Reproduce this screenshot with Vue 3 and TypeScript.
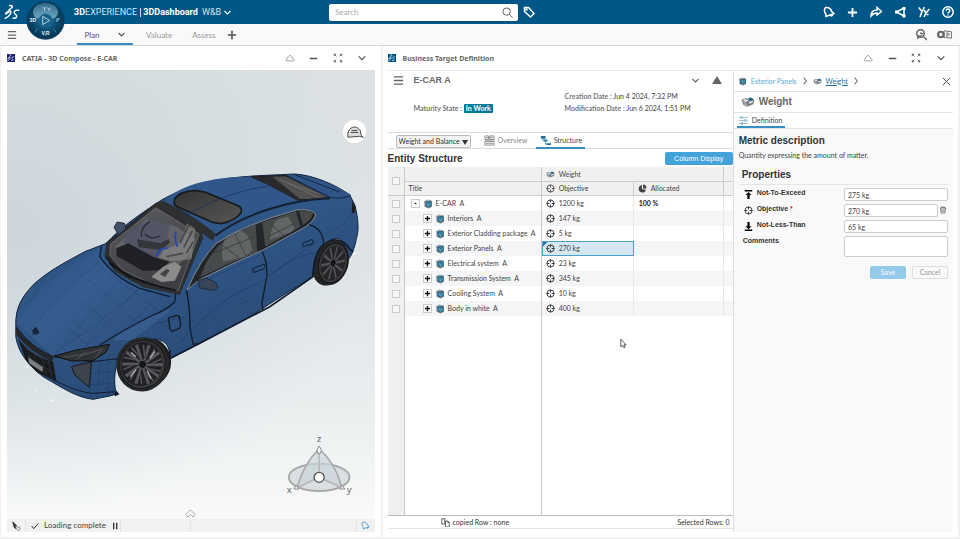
<script setup lang="ts">
import { ref } from 'vue'

interface Part {
  name: string
  objective: string
  root?: boolean
}

const parts: Part[] = [
  { name: 'E-CAR  A', objective: '1200 kg', root: true },
  { name: 'Interiors  A', objective: '147 kg' },
  { name: 'Exterior Cladding package  A', objective: '5 kg' },
  { name: 'Exterior Panels  A', objective: '270 kg' },
  { name: 'Electrical system  A', objective: '23 kg' },
  { name: 'Transmission System  A', objective: '345 kg' },
  { name: 'Cooling System  A', objective: '10 kg' },
  { name: 'Body in white  A', objective: '400 kg' },
]

const selected = ref(3)
const notToExceed = ref('275 kg')
const objective = ref('270 kg')
const notLessThan = ref('65 kg')
const comments = ref('')
const search = ref('')
const spokes = [0, 36, 72, 108, 144, 180, 216, 252, 288, 324]
</script>

<template>
  <div class="page">
    <svg class="defs" aria-hidden="true">
      <symbol id="i-menu" viewBox="0 0 12 12"><path d="M1 2h10M1 6h10M1 10h10" /></symbol>
      <symbol id="i-chev" viewBox="0 0 12 12"><path d="M2 4l4 4 4-4" /></symbol>
      <symbol id="i-right" viewBox="0 0 12 12"><path d="M4 1l4 5-4 5" /></symbol>
      <symbol id="i-plus" viewBox="0 0 12 12"><path d="M6 1v10M1 6h10" /></symbol>
      <symbol id="i-minus" viewBox="0 0 12 12"><path d="M1 6h10" /></symbol>
      <symbol id="i-close" viewBox="0 0 12 12"><path d="M2 2l8 8M10 2l-8 8" /></symbol>
      <symbol id="i-cloud" viewBox="0 0 12 12"><path d="M3 9.500C1 9.500 1 6.800 3 6.500C3.500 3 7 2 8 4.500C8.500 5.300 8.500 6 8.700 6.500C11.500 6.500 11.500 9.500 9.500 9.500Z" /></symbol>
      <symbol id="i-expand" viewBox="0 0 12 12">
        <path d="M1.500 1.500L4 4M10.500 1.500L8 4M1.500 10.500L4 8M10.500 10.500L8 8" />
        <path class="solid" d="M1 1h3L1 4zM11 1v3L8 1zM1 11V8l3 3zM11 11H8l3-3z" />
      </symbol>
      <symbol id="i-bell" viewBox="0 0 12 12"><path d="M2.500 1.500C6 1 8 3 8.700 5.500L11 7.500L3 10.500L2.800 8C1 6 1 3 2.500 1.500ZM7.500 9c1 1.500 2 1 2-.7" /></symbol>
      <symbol id="i-ds" viewBox="0 0 30 30">
        <path d="M9 3C15 2 17 4 12 8L8 11M2 18C8 9 15 11 11 18C9 22 5 24 1 26M3 18l6-4M15 25C22 26 25 22 20 18C16 14 18 10 27 11" />
      </symbol>
      <symbol id="i-part" viewBox="0 0 18 18">
        <path fill="#707880" d="M2 4L8 1l8 2v11l-6 3-7-3z" />
        <path fill="#b3bec6" d="M3 4l5-2 6 1-5 2zM2 6l2 1v7l-2-1z" />
        <circle cx="10" cy="9" r="5.500" fill="#17607f" />
        <path fill="none" stroke="#78bdd6" stroke-width="1.200" d="M7 8l3-2 3 2v3l-3 2-3-2zM7 8l3 2 3-2M10 10v3" />
      </symbol>
      <symbol id="i-weight" viewBox="0 0 24 18">
        <path fill="#777d82" d="M1 5l8-3 5 3 6-3 3 5-2 6-10 4-7-3z" />
        <path fill="#e4e7e9" d="M3 6l5-2 5 3-5 2zM13 9l6-3 2 3-6 3z" />
        <path fill="#1e668b" d="M12 3l5-2 4 4-5 3z" />
        <path fill="none" stroke="#fff" d="M4 9l5 3M6 13l5 2" />
      </symbol>
      <symbol id="i-target" viewBox="0 0 16 16"><circle cx="8" cy="8" r="6.300" /><path d="M8 1v5M8 10v5M1 8h5M10 8h5" /></symbol>
      <symbol id="i-pie" viewBox="0 0 16 16"><path class="solid" d="M7 2a6.500 6.500 0 1 0 7 8L7 9zM9 1a6.500 6.500 0 0 1 6 7H9z" /></symbol>
      <symbol id="i-trash" viewBox="0 0 12 12"><path d="M1.500 3h9M4 3V1.500h4V3M2.500 3l.7 7.500h5.600L9.500 3M4.700 5v4M7.300 5v4" /></symbol>
    </svg>

    <header class="topbar">
      <a href="#" class="brand" aria-label="Home"><svg class="ic ds"><use href="#i-ds" /></svg></a>
      <button class="compass" aria-label="Compass">
        <svg viewBox="0 0 114 114">
          <defs>
            <radialGradient id="ball" cx=".5" cy=".45" r=".55">
              <stop offset="0" stop-color="#2d7ea6" /><stop offset=".6" stop-color="#0b4d73" /><stop offset="1" stop-color="#053352" />
            </radialGradient>
            <linearGradient id="shine" x1="0" y1="0" x2="0" y2="1">
              <stop offset="0" stop-color="#3f7797" /><stop offset="1" stop-color="#8fbdd2" />
            </linearGradient>
          </defs>
          <circle cx="57" cy="57" r="56" fill="#0a3f61" />
          <circle cx="57" cy="57" r="51" fill="url(#ball)" />
          <path d="M21 37C18 18 36 6 57 6s39 12 36 31c-5 12-12 16-17 13C66 35 48 35 38 50c-6 3-13-1-17-13z" fill="url(#shine)" opacity=".75" />
          <path d="M34 80l-8 12M80 80l8 12" stroke="#4d9cc0" stroke-width="2" />
          <circle cx="57" cy="57" r="20" fill="#176087" stroke="#347e9f" />
          <path d="M49 45l20 12-20 12z" fill="none" stroke="#c7e8f5" stroke-width="2.500" />
          <path d="M48 17l6 5v6M60 17l-6 5M62 20l5 4v5M73 19l-6 5" fill="none" stroke="#e3f3f9" stroke-width="2" />
          <g fill="#e3f3f9" font-family="Liberation Sans, sans-serif" font-size="15" font-weight="700" text-anchor="middle">
            <text x="20" y="62">3D</text><text x="93" y="62">i²</text><text x="57" y="98">V,R</text>
          </g>
        </svg>
      </button>
      <button class="title"><b>3D</b>EXPERIENCE <i></i> <b>3DDashboard</b> <span>W&amp;B</span><svg class="ic s9 bold"><use href="#i-chev" /></svg></button>
      <form class="search" @submit.prevent>
        <input v-model="search" type="text" placeholder="Search" aria-label="Search" />
        <button aria-label="Run search">
          <svg class="ic s11" viewBox="0 0 12 12"><circle cx="5" cy="5" r="4" /><path d="M8 8l3.500 3.500" /></svg>
        </button>
      </form>
      <button class="tag" aria-label="Tags">
        <svg class="ic s12 bold" viewBox="0 0 12 12"><path d="M1.500 1.500h4l5.500 6-3.500 3.500-6-5.500z" /><circle cx="3.500" cy="3.500" r=".5" /></svg>
      </button>
      <nav class="tools">
        <button aria-label="Notifications"><svg class="ic s12 bold"><use href="#i-bell" /></svg></button>
        <button aria-label="Add"><svg class="ic s11 heavy"><use href="#i-plus" /></svg></button>
        <button aria-label="Share"><svg class="ic s12 bold" viewBox="0 0 12 12"><path d="M1 10c0-4 2-6 6-6V1.500L11.500 5.500 7 9V7C4.500 7 3 7.500 1 10z" /></svg></button>
        <button aria-label="Collaborate"><svg class="ic s12 bold" viewBox="0 0 12 12"><path d="M10 2L2.500 6 10 10M10 2v8" /><path class="solid" d="M8.500 1h3v3h-3zM1 4.500h3v3H1zM8.500 8.500h3v3h-3z" /></svg></button>
        <button aria-label="Communities"><svg class="ic s12 bold" viewBox="0 0 12 12"><path d="M.7 1.500L4 5.500M6.500 1L4 5.500 2 11M6 4l2 3M11.500 3L8 7l-2 4M8.500 8.500h2" /></svg></button>
        <button aria-label="Help"><svg class="ic s12 bold" viewBox="0 0 12 12"><circle cx="6" cy="6" r="5.200" /><path d="M4.300 4.700c0-2.300 3.500-2.300 3.500 0C7.800 6 6 6 6 7.500M6 8.600v1" /></svg></button>
      </nav>
    </header>

    <nav class="tabbar">
      <button class="burger" aria-label="Menu"><svg class="ic s10 bold"><use href="#i-menu" /></svg></button>
      <button class="tab on">Plan<svg class="ic s9 bold"><use href="#i-chev" /></svg></button>
      <button class="tab second">Valuate</button>
      <button class="tab third">Assess</button>
      <button class="addtab" aria-label="Add tab"><svg class="ic s10 heavy"><use href="#i-plus" /></svg></button>
      <div class="right">
        <button aria-label="Inspect"><svg class="ic s12 bold" viewBox="0 0 12 12"><circle cx="5.500" cy="4.500" r="3.700" /><path d="M8.500 7.500L12 11M3 10V7h4M5 4l3 1" /></svg></button>
        <button aria-label="Media"><svg class="ic media" viewBox="0 0 18 12"><circle cx="4.500" cy="6" r="3" stroke-width="2.400" /><path d="M8 2l8 1v7l-8-1zM11 4v4l3-2z" /></svg></button>
      </div>
    </nav>

    <main class="board">
      <section class="widget viewer">
        <header class="whead">
          <span class="app navy"><svg class="ic"><use href="#i-ds" /></svg></span>
          <h2>CATIA - 3D Compose - E-CAR</h2>
          <button aria-label="Cloud"><svg class="ic s10 thin"><use href="#i-cloud" /></svg></button>
          <button aria-label="Minimize"><svg class="ic s9 heavy"><use href="#i-minus" /></svg></button>
          <button aria-label="Maximize"><svg class="ic s10"><use href="#i-expand" /></svg></button>
          <button aria-label="Options"><svg class="ic s10 bold"><use href="#i-chev" /></svg></button>
        </header>

        <div class="scene">
          <svg class="model" viewBox="21 210 1104 1347" preserveAspectRatio="xMidYMid slice" role="img" aria-label="E-CAR">
            <defs>
              <linearGradient id="paint" x1="0" y1="0" x2=".6" y2="1">
                <stop offset="0" stop-color="#2c5080" /><stop offset=".5" stop-color="#2f5686" /><stop offset="1" stop-color="#27466f" />
              </linearGradient>
              <linearGradient id="hood" x1="0" y1="0" x2="1" y2=".8">
                <stop offset="0" stop-color="#2a4f7f" /><stop offset=".45" stop-color="#365d8e" /><stop offset="1" stop-color="#2b4e7e" />
              </linearGradient>
              <linearGradient id="glass" x1="0" y1="0" x2=".4" y2="1">
                <stop offset="0" stop-color="#5b5c60" /><stop offset="1" stop-color="#3d3e42" />
              </linearGradient>
              <linearGradient id="roofglass" x1="0" y1="0" x2="1" y2="1">
                <stop offset="0" stop-color="#343434" /><stop offset="1" stop-color="#575655" />
              </linearGradient>
              <clipPath id="shell"><path d="M160 590C210 540 280 330 305 265L300 290Q340 350 420 385L520 410 525 425 460 465 300 555 220 590Z" /></clipPath>
            </defs>
            <g transform="translate(0 480)">
              <ellipse cx="986" cy="306" rx="48" ry="72" fill="#222427" transform="rotate(14 986 306)" />
              <ellipse cx="438" cy="606" rx="76" ry="76" fill="#1d1f22" transform="rotate(22 438 606)" />
              <path fill="url(#paint)" stroke="#13243d" stroke-width="3" d="M48 500C45 440 70 405 105 370 150 330 200 305 255 275L320 250C360 205 410 170 470 130 510 102 570 80 640 65 710 48 760 48 885 42 940 45 1010 75 1050 105L1065 135C1077 180 1077 215 1070 235 1065 262 1055 290 1044 300L1030 245C1000 215 945 260 938 350L820 425 750 470 600 550 510 597C515 520 440 530 400 558 345 595 340 640 347 690L355 700 330 708 280 718C230 712 190 685 130 650 90 620 55 580 48 530Z" />
              <!-- hood -->
              <path fill="url(#hood)" d="M52 490C100 390 200 320 305 260L300 290Q340 350 420 385L520 410 525 425 460 465 300 555 160 590Z" />
              <path fill="#4a73a6" opacity=".35" d="M340 540C370 500 450 470 500 450 540 440 470 480 400 540Z" />
              <g fill="none" stroke="#17305a" stroke-width="1" opacity=".6" clip-path="url(#shell)">
                <path d="M100 380L360 600M150 330L400 560M200 300L450 520M250 280L500 470M280 250L520 430M90 560L300 330M150 600L370 350M220 600L430 370M300 590L490 390" />
              </g>
              <g fill="none" stroke="#17305a" stroke-width="1.500">
                <path d="M75 450L140 350M80 520C150 440 230 360 300 300M160 585C210 540 320 480 420 385M52 490C90 530 130 570 160 590" opacity=".5" />
                <path d="M275 605l-5 110M300 602l-8 113M325 600v108M270 640l75-6M270 675l75-6M350 597l-10 110M200 500l90 80" opacity=".6" />
              </g>
              <g fill="none" stroke="#101b2c" stroke-width="4">
                <path d="M305 258L300 290Q340 350 420 385L510 410M527 395L525 425Q500 450 460 465 370 510 300 555M320 250L470 130" />
                <path d="M50 500Q90 560 160 590L275 605 355 596M80 600C150 660 220 695 280 700L345 695" stroke-width="3" />
                <path d="M560 390Q572 450 570 500L580 553 600 550" />
              </g>
              <path d="M470 490L560 470" stroke="#1c3661" stroke-width="2" />
              <!-- windshield -->
              <path fill="#2c2e30" d="M320 250L470 128 490 125 600 190 610 235 540 405 430 382 345 335 314 288Z" />
              <path fill="url(#glass)" stroke="#77787a" stroke-width="2" d="M332 252L468 143 560 200 598 222 535 393 440 365 365 328 330 285Z" />
              <path fill="#77777b" opacity=".5" d="M345 260L440 178 530 200 590 240 570 280 510 340 430 290Z" />
              <path fill="#4d5266" d="M390 210l60-30 60 15-20 90-60 20-60-60z" opacity=".8" />
              <path fill="#202124" d="M350 265l35-15 75 40 50 15-30 25-50 3-80-46z" />
              <path fill="#35363a" d="M412 238l70 12 25-14 3 12-26 22-68-8z" />
              <path d="M435 222q20 20 45 6M450 185q-30 20-25 45" fill="none" stroke="#2a2b2f" stroke-width="4" />
              <path fill="#8d8c89" d="M495 262q25 6 50-22l18-52 24 20-12 90-60 6-38-12z" opacity=".6" />
              <path fill="none" stroke="#2849a8" stroke-width="6" d="M528 215q-5 25 5 45M506 264q-30-2-36 26" />
              <path d="M540 250l30-60M552 262l26-50M560 280l20-35M500 290l50-10" stroke="#333538" stroke-width="5" opacity=".7" />
              <path fill="#8c8b89" d="M455 350l35-30 35-14 20 14-20 42-40 4z" />
              <path fill="#424345" d="M480 342l20-15 10 4-14 20z" />
              <path d="M318 290Q360 340 430 366L530 392M328 310l60 40 100 32" fill="none" stroke="#141516" stroke-width="5" />
              <path fill="#435169" stroke="#232b38" stroke-width="3" d="M343 202l9-16 22 4 4 16-22 18z" />
              <!-- front end -->
              <path fill="#232527" d="M48 500Q85 555 160 590L158 606Q90 575 50 525Z" />
              <path fill="#17191b" d="M54 535Q90 585 160 606L170 665 110 635 78 600Z" />
              <path d="M70 560l90 60M80 585l82 55M78 550l20 65M100 570l18 60M125 588l15 56M145 600l12 58" stroke="#34373a" stroke-width="2" />
              <path fill="#7c7e80" d="M85 592l45 30-2 14-40-26z" />
              <path fill="#303236" stroke="#111" stroke-width="3" d="M163 588L230 570 330 553 318 577 280 602 215 603Z" />
              <path d="M190 592l70-10 50-16M230 598l30-22M285 595l20-25" stroke="#62666c" stroke-width="2" fill="none" />
              <path fill="#3c434d" stroke="#15191f" stroke-width="3" d="M215 620Q245 610 275 607L268 682 225 645Z" />
              <path d="M100 522v-12l8-8 5 8 5 8-6 4zM96 514l14-6" fill="#17263d" stroke="#17263d" stroke-width="3" />
              <path fill="none" stroke="#111a29" stroke-width="4" d="M506 478q-2-4 6-6l18-6 8 3 5 28-4 8-22 9-6-5z" />
              <path d="M345 698l10 4-10 5M510 595v-25" stroke="#111" stroke-width="4" />
              <!-- front wheel -->
              <g transform="translate(428 613) rotate(22)">
                <ellipse rx="78" ry="82" fill="#262728" />
                <ellipse rx="68" ry="73" fill="#39393b" stroke="#17191a" stroke-width="3" />
                <ellipse cx="-3" rx="60" ry="67" fill="#202123" />
                <path v-for="a in spokes" :key="a" :transform="`rotate(${a})`" d="M-3-10L-9-60 2-64 5-12zM9-20l5-38 6 2-6 40z" fill="#56585b" stroke="#111" />
                <path d="M-45-20l18 6M20-50l-6 24M40 30L20 12M-20 48l8-26" stroke="#aeb0b3" stroke-width="4" />
                <circle r="12" fill="#151617" stroke="#55585b" stroke-width="3" />
              </g>
              <!-- roof and side -->
              <g transform="translate(540 -150)">
                <path fill="#2d2f31" d="M-70 278L-50 272Q60 320 110 372L98 392Q20 330-70 290Z" />
                <path fill="#30568a" d="M-50 272C30 205 150 200 215 200L355 270Q180 300 108 372 50 320-50 272Z" />
                <path fill="url(#roofglass)" stroke="#17191b" stroke-width="5" stroke-linejoin="round" d="M-15 267Q0 243 50 242L75 246 175 287Q188 293 184 308 165 332 125 341L98 337-8 290Q-22 281-15 267Z" />
                <path d="M48 300Q150 245 265 228M15 315L48 300" fill="none" stroke="#152e54" stroke-width="2" />
                <path fill="#535150" stroke="#1b1d1f" stroke-width="4" d="M215 200L318 197 450 262Q410 268 355 270L270 225Z" />
                <path fill="#282a2c" d="M215 198L280 202 365 270 350 270 262 219Z" />
                <path d="M300 208l115 54M325 220l95 32" stroke="#85827f" stroke-width="2" opacity=".7" />
                <path fill="#2f5485" d="M322 197Q400 192 510 252L505 264 450 264Z" />
                <path fill="none" stroke="#132946" stroke-width="3" d="M322 197L450 262Q490 270 512 255M345 194L480 246" />
                <path fill="none" stroke="#14202f" stroke-width="6" d="M108 376Q170 330 260 300 350 270 450 265" />
                <path fill="#232629" stroke="#858a90" stroke-width="3" d="M22 540Q60 450 110 400 190 345 350 300 400 295 408 315 400 340 360 360L250 420 150 465 58 510Z" />
                <path fill="#464a4b" d="M62 502Q85 420 160 375L228 342 232 426 150 460ZM248 337L348 304 362 350 256 410ZM358 304L398 304Q405 320 370 344Z" />
                <path fill="#8b8d8d" opacity=".4" d="M130 455q-10-50 10-75l35-20q35 5 42 60l-20 20zM270 390q5-50 25-62l30-8 20 35-10 12z" />
                <path d="M100 430l125-50M120 400l60 45M165 373l35 66M270 340l45 40M265 380l80-40" stroke="#303334" stroke-width="2" />
                <path fill="#3a455a" stroke="#202837" stroke-width="3" d="M55 512l25-8 28 14 6 14-10 9-44-7z" />
                <g fill="none" stroke="#101b2c" stroke-width="5">
                  <path d="M247 425Q265 460 260 505L246 580 250 600M388 344Q428 355 432 400L425 440" stroke-width="4" />
                  <path d="M219 476l34-14 4 8-4 6-32 12zM369 400l28-12 4 8-4 6-26 8z" stroke-width="3" />
                  <path d="M-28 745L60 700 270 590 400 500" stroke-width="5" />
                  <path d="M40 530L240 435M260 500L420 390M440 370Q500 350 520 300" stroke="#21406d" stroke-width="2" />
                  <path d="M180 584l28-12M260 505Q350 430 405 430M0 700Q120 560 235 520" stroke="#1e3a64" stroke-width="2" />
                </g>
                <path fill="#1c1d1f" d="M517 275l10 15-2 18-9 2z" />
                <path d="M400 500Q400 430 430 405 480 370 512 420L520 425" fill="none" stroke="#10192a" stroke-width="5" />
                <g transform="translate(456 458) rotate(16)">
                  <ellipse rx="50" ry="69" fill="#232426" />
                  <ellipse cx="4" rx="42" ry="61" fill="#39393b" stroke="#151617" stroke-width="3" />
                  <ellipse cx="4" rx="35" ry="54" fill="#242527" />
                  <g transform="translate(4 0) scale(.56 .84)">
                    <path v-for="a in spokes" :key="a" :transform="`rotate(${a})`" d="M-4-10L-7-60 4-62 5-12z" fill="#525457" stroke="#111" />
                    <circle r="12" fill="#151617" />
                  </g>
                </g>
              </g>
              <path d="M108 688l4 6M150 718l8 5M80 618l5 3M1062 284l5-6" stroke="#fff" stroke-width="4" />
            </g>
            <!-- axis robot -->
            <g transform="translate(0 1260)" fill="none" stroke="#aaa" stroke-width="5">
              <ellipse cx="958" cy="172" rx="91" ry="41" fill="#d9dfe2" stroke-width="6" />
              <ellipse cx="958" cy="172" rx="86" ry="36" stroke="#ddd" stroke-width="2" />
              <path d="M958 88Q915 125 892 203L958 172 1026 203Q1005 125 958 88Z" fill="#cbd5db" fill-opacity=".7" />
              <path d="M958 90v82M958 172L892 203M958 172l68 31" stroke="#bbb" />
              <path d="M958 78l7 12-3 10h-8l-3-10zM889 196l8 11h-15zM1027 196l8 11h-15z" fill="#fff" stroke="#888" stroke-width="3" />
              <circle cx="958" cy="172" r="15" fill="#fff" stroke="#555" stroke-width="4" />
              <g fill="#666" stroke="none" font-family="Noto Sans, sans-serif" font-size="28" text-anchor="middle">
                <text x="958" y="65">z</text><text x="868" y="218">x</text><text x="1048" y="218">y</text>
              </g>
            </g>
          </svg>
          <button class="cap" aria-label="View mode">
            <svg viewBox="0 0 24 24"><path d="M5 16C5 9 10 6 15 8q4 2 4 8l2 2-4-1-12 1zM9 11h6M8 13h8" /></svg>
          </button>
          <button class="pull" aria-label="Show action bar">
            <svg viewBox="0 0 12 10"><path d="M1 6l5-5 5 5-2 3-3-3-3 3z" /></svg>
          </button>
        </div>

        <footer class="status">
          <button class="pick" aria-label="Selection"><svg viewBox="0 0 12 12"><path d="M2 1l5 5H4.500L6 9 4 8z" fill="#333" stroke="#333" /><circle cx="9" cy="9" r="2" fill="none" stroke="#777" /></svg></button>
          <span class="load"><svg class="ic s8 bold dark" viewBox="0 0 12 12"><path d="M1 6l3 4 7-8" /></svg>Loading complete<button aria-label="Pause"><svg class="ic s8 heavy dark" viewBox="0 0 12 12"><path d="M4 1v10M8.500 1v10" /></svg></button></span>
          <span class="half"></span>
          <button class="ping" aria-label="Messages"><svg class="ic s9"><use href="#i-bell" /></svg></button>
        </footer>
      </section>

      <section class="widget target">
        <header class="whead">
          <span class="app blue"><svg class="ic"><use href="#i-ds" /></svg></span>
          <h2>Business Target Definition</h2>
          <button aria-label="Cloud"><svg class="ic s10 thin"><use href="#i-cloud" /></svg></button>
          <button aria-label="Minimize"><svg class="ic s9 heavy"><use href="#i-minus" /></svg></button>
          <button aria-label="Maximize"><svg class="ic s10"><use href="#i-expand" /></svg></button>
          <button aria-label="Options"><svg class="ic s10 bold"><use href="#i-chev" /></svg></button>
        </header>

        <div class="split">
          <div class="entity">
            <div class="ehead">
              <div class="etitle">
                <button aria-label="Menu"><svg class="ic s11 bold"><use href="#i-menu" /></svg></button>
                <h1>E-CAR A</h1>
                <button aria-label="More"><svg class="ic s9 bold"><use href="#i-chev" /></svg></button>
                <button aria-label="Collapse"><svg class="ic s12" viewBox="0 0 12 12"><path class="solid" d="M6 2l5 8H1z" /></svg></button>
              </div>
              <div class="facts">
                <p class="state"><b>Maturity State</b> : <strong>In Work</strong></p>
                <p><b>Creation Date</b> : Jun 4 2024, 7:32 PM<br /><b>Modification Date</b> : Jun 6 2024, 1:51 PM</p>
              </div>
            </div>
            <nav class="etabs">
              <span class="pickbox">
                <select aria-label="Discipline"><option>Weight and Balance</option></select>
                <svg viewBox="0 0 6 6"><path d="M0 1h6L3 6z" /></svg>
              </span>
              <button class="etab"><svg class="ic s11" viewBox="0 0 12 12"><path d="M1 1h4v4H1zM6.500 1H11v4H6.500zM1 7h10v4H1zM2 3h8M2 9h8M1 5.500h10" /></svg>Overview</button>
              <button class="etab on">
                <svg class="s11" viewBox="0 0 12 12"><path d="M1 1h5v3H1zM4 5h4v2H4zM7 9h5v2H7z" fill="#1d6f98" /><path d="M3 4v2h2M6 7v3h2" fill="none" stroke="#46a2cf" /></svg>Structure</button>
            </nav>
            <div class="shead">
              <h2>Entity Structure</h2>
              <button>Column Display</button>
            </div>
            <div class="grid">
              <table>
                <colgroup><col class="c1" /><col class="c2" /><col class="c3" /><col class="c4" /><col class="c5" /></colgroup>
                <thead>
                  <tr>
                    <th rowspan="2" class="chk"><input type="checkbox" aria-label="Select all" /></th>
                    <th></th>
                    <th colspan="2"><span class="cell"><svg class="s9"><use href="#i-weight" /></svg>Weight</span></th>
                    <th></th>
                  </tr>
                  <tr class="sub">
                    <th class="name">Title</th>
                    <th><span class="cell"><svg class="ic s9 bold"><use href="#i-target" /></svg>Objective</span></th>
                    <th><span class="cell"><svg class="ic s9"><use href="#i-pie" /></svg>Allocated</span></th>
                    <th></th>
                  </tr>
                </thead>
                <tbody>
                  <tr v-for="(p, i) in parts" :key="p.name" class="row">
                    <td class="chk"><input type="checkbox" :aria-label="`Select ${p.name}`" /></td>
                    <td><span class="cell tree" :class="{ root: p.root }"><button :aria-label="p.root ? 'Collapse' : 'Expand'"><svg viewBox="0 0 8 8"><path :d="p.root ? 'M3 4h2' : 'M1 4h6M4 1v6'" /></svg></button><svg class="s10"><use href="#i-part" /></svg>{{ p.name }}</span></td>
                    <td :class="{ picked: i === selected }" @click="selected = i"><span class="cell"><svg class="ic s9 bold black"><use href="#i-target" /></svg>{{ p.objective }}</span></td>
                    <td><b v-if="p.root" class="pct">100 %</b></td>
                    <td></td>
                  </tr>
                  <tr class="rest"><td class="chk"></td><td></td><td></td><td></td><td></td></tr>
                </tbody>
              </table>
              <svg class="pointer" viewBox="0 0 8 12"><path d="M1 1v9l2-2 1.500 3L6 10 4.500 7.500H7z" fill="#fff" stroke="#444" /></svg>
            </div>
            <footer class="gfoot">
              <span><svg class="ic s9" viewBox="0 0 12 12"><path d="M1 1h4v7H1zM6 4h3l2 2v6H6zM9 4v2h2" /></svg>copied Row : none</span>
              <span>Selected Rows: 0</span>
            </footer>
          </div>

          <aside class="side">
            <nav class="crumbs">
              <svg class="s9"><use href="#i-part" /></svg><a href="#">Exterior Panels</a>
              <svg class="ic s8 bold"><use href="#i-right" /></svg>
              <svg class="s9"><use href="#i-weight" /></svg><a href="#" class="here">Weight</a>
              <svg class="ic s8 bold"><use href="#i-right" /></svg>
              <button aria-label="Close"><svg class="ic s11"><use href="#i-close" /></svg></button>
            </nav>
            <div class="stitle"><svg class="wbig"><use href="#i-weight" /></svg><h2>Weight</h2></div>
            <div class="stabs"><button><svg class="s9" viewBox="0 0 12 12"><path d="M0 2h12M0 6h12M0 10h12" stroke="#9ab" /><g fill="#fff" stroke="#2f95c9"><circle cx="3.500" cy="2" r="1.300" /><circle cx="8.500" cy="6" r="1.300" /><circle cx="4" cy="10" r="1.300" /></g></svg>Definition</button></div>
            <form class="form" @submit.prevent>
              <h3>Metric description</h3>
              <p>Quantity expressing the amount of matter.</p>
              <h3 class="props">Properties</h3>
              <div class="field">
                <svg class="s9" viewBox="0 0 12 12"><path d="M1 0h10v2H1zM6 2.500l4 4H7.500V12h-3V6.500H2z" /></svg>
                <label for="nte">Not-To-Exceed</label><input id="nte" v-model="notToExceed" type="text" />
              </div>
              <div class="field">
                <svg class="ic s9 bold black"><use href="#i-target" /></svg>
                <label for="obj">Objective <em>*</em></label><input id="obj" v-model="objective" type="text" />
                <button type="button" aria-label="Delete objective"><svg class="ic s8"><use href="#i-trash" /></svg></button>
              </div>
              <div class="field">
                <svg class="s9" viewBox="0 0 12 12"><path d="M1 10h10v2H1zM6 9.500l4-4H7.500V0h-3v5.500H2z" /></svg>
                <label for="nlt">Not-Less-Than</label><input id="nlt" v-model="notLessThan" type="text" />
              </div>
              <div class="field tall"><label for="com">Comments</label><textarea id="com" v-model="comments"></textarea></div>
              <div class="actions"><button class="save">Save</button><button type="button" class="cancel">Cancel</button></div>
            </form>
          </aside>
        </div>
      </section>
    </main>
  </div>
</template>

<style>
body { margin: 0; }
</style>

<style scoped>
* { box-sizing: border-box; }
.page { display: flex; flex-direction: column; min-height: 100vh; background: #f1f1f1; color: #444; font: 7px/9px Lato, "Liberation Sans", sans-serif; }
.defs { position: absolute; width: 0; height: 0; }
h1, h2, h3, p { margin: 0; }
button { display: flex; align-items: center; justify-content: center; flex: none; border: 0; padding: 0; background: none; color: inherit; font: inherit; cursor: pointer; }
input, textarea, select { font: inherit; color: inherit; }
svg { display: block; flex: none; }
.ic { fill: none; stroke: currentColor; stroke-width: 1; }
.solid { fill: currentColor; stroke: none; }
.thin { color: #888; }
.bold { stroke-width: 1.5; }
.heavy { stroke-width: 2; }
.dark { color: #333; }
.black { color: #222; }
.s8 { width: 8px; height: 8px; }
.s9 { width: 9px; height: 9px; }
.s10 { width: 10px; height: 10px; }
.s11 { width: 11px; height: 11px; }
.s12 { width: 12px; height: 12px; }

.topbar { position: relative; display: flex; align-items: center; height: 24px; padding-right: 6px; background: #005686; color: #fff; }
.brand { width: 74px; padding-left: 4px; color: #fff; }
.ds { width: 17px; height: 17px; stroke-width: 2.5; }
.compass { position: absolute; z-index: 2; left: 26px; top: 1px; width: 39px; height: 39px; }
.compass svg { width: 39px; height: 39px; }
.title { width: 255px; justify-content: flex-start; font: 9px/12px Roboto, sans-serif; white-space: pre; color: #d4e4ee; }
.title b { color: #fff; }
.title i { width: 1px; height: 9px; margin: 0 2px 0 1px; background: #cde; }
.title span { margin-left: 4px; }
.title .ic { color: #fff; margin-left: 2px; }
.search { display: flex; width: 189px; height: 17px; border-radius: 2px; background: #fff; }
.search input { flex: 1; min-width: 0; border: 0; padding: 0 6px; background: none; outline: 0; font-size: 8px; color: #444; }
.search input::placeholder { color: #aaa; }
.search button { width: 22px; color: #555; }
.tag { margin-left: 5px; }
.tools { display: flex; gap: 12px; margin-left: auto; }

.tabbar { display: flex; height: 22px; padding: 0 6px 0 7px; background: #f9f9f9; border-bottom: 1px solid #d5dadd; font: 8px/10px Lato, sans-serif; color: #999; }
.burger { width: 10px; color: #666; }
.tab.on { width: 56px; margin-left: 60px; padding-top: 2px; gap: 17px; border-bottom: 2px solid #368ec4; color: #555; }
.second { margin-left: 13px; }
.third { margin-left: 20px; }
.addtab { margin-left: 11px; color: #555; }
.right { display: flex; gap: 9px; margin-left: auto; color: #666; }
.media { width: 18px; height: 11px; }

.board { display: grid; grid-template-columns: 380fr 576fr; gap: 2px; flex: 1; padding: 0 2px 2px 1px; }
.widget { display: flex; flex-direction: column; min-width: 0; background: #fff; }
.viewer { padding: 0 6px 5px; }
.target { padding: 0 5px 5px; }
.whead { display: flex; align-items: center; height: 24px; padding-right: 7px; color: #555; }
.whead h2 { flex: 1; margin-left: 7px; font: 700 7px/9px "Noto Sans", sans-serif; color: #666; }
.whead button { width: 24px; }
.whead button:last-child { width: 25px; margin-right: -7px; }
.app { display: flex; width: 8px; height: 8px; color: #fff; }
.app .ic { width: 8px; height: 8px; stroke-width: 2.5; }
.navy { background: #14207a; }
.blue { background: #005686; }

.scene { position: relative; flex: 1 1 0; min-height: 0; background: radial-gradient(ellipse at 0 35%, #ccd6db 0, #ccd6db00 70%), linear-gradient(180deg, #dbe1e3 0, #dfe5e7 45%, #eaeeef 75%, #f9fafa 100%); }
.model { width: 100%; height: 100%; }
.cap { position: absolute; right: 9px; top: 50px; width: 23px; height: 23px; border-radius: 50%; background: #fff; }
.cap svg { width: 23px; height: 23px; fill: #ddd; stroke: #444; }
.pull { position: absolute; left: 50%; bottom: 1px; width: 12px; height: 10px; margin-left: -6px; }
.pull svg { width: 11px; height: 9px; fill: #fff; stroke: #999; }
.status { display: flex; height: 13px; background: #f0f1f1; font: 8px/13px Lato, sans-serif; }
.status > * { border-right: 1px solid #e2e3e4; }
.pick { width: 19px; }
.pick svg { width: 10px; height: 10px; }
.load { display: flex; align-items: center; width: 95px; gap: 5px; padding-left: 5px; white-space: nowrap; }
.half { width: 70px; }
.ping { width: 19px; margin-left: auto; border-left: 1px solid #e2e3e4; border-right: 0; color: #2e87bd; }

.split { display: flex; flex: 1; border-top: 1px solid #e8e8e8; }
.entity { display: flex; flex-direction: column; flex: 346; min-width: 0; }
.side { display: flex; flex-direction: column; flex: 220; min-width: 0; border-left: 1px solid #ddd; }
.ehead { height: 62px; border-bottom: 1px solid #ddd; }
.etitle { display: flex; align-items: center; height: 18px; padding: 0 10px 0 5px; color: #666; }
.etitle h1 { flex: 1; margin-left: 10px; font: 700 9px/11px "Liberation Sans", sans-serif; }
.etitle button:last-child { margin-left: 11px; }
.facts { display: flex; padding: 1px 0 0 26px; line-height: 12px; }
.facts .state { width: 151px; padding-top: 12px; }
.facts b { color: #777; }
.state strong { display: inline-block; padding: 0 2px; border-radius: 1px; background: #00799a; color: #fff; line-height: 9px; }
.etabs { display: flex; align-items: center; height: 16px; padding-left: 8px; border-bottom: 1px solid #ddd; }
.pickbox { position: relative; width: 75px; height: 13px; margin-top: 1px; }
.pickbox select { width: 100%; height: 100%; padding: 0 2px; border: 1px solid #bbb; border-radius: 2px; appearance: none; background: #f2f2f2; color: #333; }
.pickbox svg { position: absolute; right: 3px; top: 4px; width: 6px; height: 6px; fill: #333; pointer-events: none; }
.etab { height: 16px; gap: 3px; padding: 2px 3px 0; margin-left: 10px; border-bottom: 2px solid transparent; color: #888; }
.etab.on { width: 49px; margin-left: 6px; border-color: #368ec4; color: #444; }
.shead { display: flex; align-items: center; height: 18px; padding-top: 1px; }
.shead h2 { flex: 1; font: 700 10px/12px "Liberation Sans", sans-serif; color: #333; }
.shead button { width: 68px; height: 13px; border-radius: 2px; background: #42a2da; color: #fff; font: 7px/9px "Liberation Sans", sans-serif; }

.grid { position: relative; flex: 1 1 0; min-height: 0; border-bottom: 1px solid #bbb; }
table { width: 100%; height: 100%; table-layout: fixed; border-spacing: 0; border-collapse: separate; }
.c1 { width: 17px; }
.c2 { width: 40%; }
.c3 { width: 92px; }
.c4 { width: 90px; }
.c5 { width: 9px; }
th, td { height: 15px; padding: 0; border-right: 1px solid #e8e8e8; text-align: left; font-weight: 400; }
th { border-color: #ccc; border-bottom: 1px solid #ccc; background: #f0f0f0; }
.sub th { height: 14px; }
td:nth-child(2) { border-color: #c8c8c8; }
th:last-child, td:last-child { border-right: 0; }
.chk { border-color: #c8c8c8; background: #f0f0f0; }
.chk input { display: block; appearance: none; width: 8px; height: 8px; margin: 0 auto; border: 1px solid #ccc; background: #f7f7f7; }
.name { padding-left: 4px; }
.cell { display: flex; align-items: center; gap: 4px; padding-left: 4px; white-space: pre; }
.row:nth-child(even) td:not(.chk) { background: #f3f5f6; }
.rest { height: 100%; }
.rest td { height: auto; }
.rest td:nth-child(n + 3) { border-right: 0; }
.tree { gap: 3px; padding-left: 18px; }
.tree.root { padding-left: 6px; }
.tree button { width: 9px; height: 9px; border: 1px solid #ccc; background: #fff; }
.tree button svg { width: 7px; height: 7px; stroke: #111; stroke-width: 1.5; }
.row td.picked.picked:not(.chk) { border: 1px solid #4a9fce; background: linear-gradient(135deg, #2879ab 0 3px, #d5e8f2 3px); }
.picked .cell { padding-left: 3px; }
.pct { padding-left: 5px; color: #222; }
.pointer { position: absolute; left: 232px; top: 171px; width: 7px; height: 11px; }
.gfoot { display: flex; justify-content: space-between; height: 13px; margin-bottom: 3px; padding: 0 3px 0 53px; border-bottom: 1px solid #e4e4e4; line-height: 13px; color: #333; }
.gfoot span { display: flex; align-items: center; gap: 3px; }

.crumbs { display: flex; align-items: center; height: 21px; gap: 4px; padding: 0 1px 0 4px; border-bottom: 1px solid #e4e4e4; }
.crumbs a { color: #5aa9d6; text-decoration: none; }
.crumbs .here { color: #1f6f9f; text-decoration: underline; }
.crumbs button { margin-left: auto; }
.stitle { display: flex; align-items: center; height: 21px; gap: 4px; padding-left: 7px; border-bottom: 1px solid #e4e4e4; }
.wbig { width: 14px; height: 12px; }
.stitle h2 { font: 700 10px/12px "Liberation Sans", sans-serif; color: #666; }
.stabs { display: flex; height: 16px; padding-left: 3px; border-bottom: 1px solid #e4e4e4; }
.stabs button { width: 48px; gap: 4px; padding-top: 2px; border-bottom: 2px solid #368ec4; color: #444; }
.form { flex: 1; padding: 5px 5px 0; background: #f9f9f9; }
.form h3 { font: 700 10px/13px "Liberation Sans", sans-serif; color: #333; }
.form p { margin-top: 4px; }
.form h3.props { margin: 8px 0 3px; padding: 0 3px 3px; border-bottom: 1px solid #e4e4e4; }
.field { display: flex; align-items: flex-start; height: 16px; padding-left: 5px; }
.field > svg { margin-top: 2px; }
.field label { flex: 1; margin-left: 4px; padding-top: 1px; font: 700 7px/8px "Liberation Sans", sans-serif; color: #333; }
.field em { color: #d33; font-style: normal; }
.field input, .field textarea { width: 104px; height: 13px; padding: 0 3px; border: 1px solid #ccc; border-radius: 2px; background: #fff; outline: 0; resize: none; line-height: 11px; }
.field #obj { width: 94px; }
.field button { width: 10px; height: 12px; }
.field.tall { height: 22px; padding-left: 0; }
.field textarea { height: 21px; }
.actions { display: flex; justify-content: flex-end; gap: 6px; margin-top: 8px; }
.actions button { width: 36px; height: 13px; border-radius: 2px; }
.save { background: #94caea; color: #fff; }
.actions .cancel { border: 1px solid #ddd; color: #999; }
</style>
